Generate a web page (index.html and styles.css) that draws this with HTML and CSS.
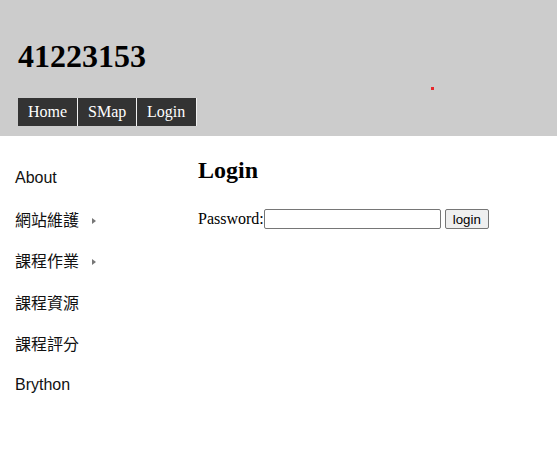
FILE: index.html
```html
<!DOCTYPE html>
<html>
<head>
<meta charset="utf-8">
<link rel="stylesheet" href="styles.css">
</head>
<body>
<header class="header">
  <h1 class="site-title">41223153</h1>
  <nav class="topnav">
    <a class="topnav-item" href="#">Home</a>
    <a class="topnav-item" href="#">SMap</a>
    <a class="topnav-item" href="#">Login</a>
  </nav>
  <span class="dot"></span>
</header>
<div class="main">
  <ul class="sidemenu">
    <li class="side-item">About</li>
    <li class="side-item">網站維護<span class="arrow"></span></li>
    <li class="side-item">課程作業<span class="arrow"></span></li>
    <li class="side-item">課程資源</li>
    <li class="side-item">課程評分</li>
    <li class="side-item">Brython</li>
  </ul>
  <section class="content">
    <h2 class="content-title">Login</h2>
    <form class="login-form">
      <label class="pw-label">Password:</label><input class="pw-input" type="password"><button class="login-btn" type="button">login</button>
    </form>
  </section>
</div>
</body>
</html>
```

FILE: styles.css
```css
html, body {
  margin: 0;
  padding: 0;
  background: #fff;
}
body {
  font-family: "Liberation Serif", "Times New Roman", serif;
  color: #000;
}
.header {
  position: relative;
  background: #cccccc;
  height: 136px;
  padding: 0 0 0 18px;
  box-sizing: border-box;
  display: flex;
  flex-direction: column;
}
.site-title {
  margin: 0;
  padding-top: 38px;
  font-size: 32px;
  line-height: 37px;
  font-weight: bold;
}
.topnav {
  display: flex;
  margin-top: 23px;
}
.topnav-item {
  display: block;
  background: #333333;
  color: #fff;
  text-decoration: none;
  font-size: 16px;
  height: 28px;
  line-height: 28px;
  padding: 0 10px;
  border-right: 1px solid #f0f0f0;
}
.topnav-item:nth-child(1) { width: 39px; }
.topnav-item:nth-child(2) { width: 38px; }
.topnav-item:nth-child(3) { width: 39px; }
.dot {
  position: absolute;
  left: 431px;
  top: 87px;
  width: 3px;
  height: 3px;
  background: #e8262b;
}
.main {
  display: flex;
}
.sidemenu {
  list-style: none;
  margin: 0;
  padding: 21px 0 0 15px;
  width: 183px;
  font-family: "Liberation Sans", Arial, "Noto Sans CJK TC", sans-serif;
  font-size: 16px;
  color: #111;
}
.side-item {
  display: flex;
  align-items: center;
  height: 41.4px;
}
.arrow {
  display: inline-block;
  margin-left: 13px;
  margin-top: 3px;
  width: 0;
  height: 0;
  border-top: 3px solid transparent;
  border-bottom: 3px solid transparent;
  border-left: 4px solid #777;
}
.content {
  flex: 1;
}
.content-title {
  margin: 20px 0 0 0;
  font-size: 24px;
  line-height: 28px;
  font-weight: bold;
}
.login-form {
  margin-top: 25px;
  display: flex;
  align-items: center;
  font-size: 16px;
}
.pw-input {
  width: 177px;
  height: 20px;
  box-sizing: border-box;
  border: 1px solid #767676;
  border-radius: 2px;
  padding: 1px 2px;
  margin: 0 4px 0 0;
  background: #fff;
}
.login-btn {
  height: 20px;
  width: 44px;
  box-sizing: border-box;
  padding: 0;
  font-family: "Liberation Sans", Arial, sans-serif;
  font-size: 13.3px;
  background: #efefef;
  border: 1px solid #767676;
  border-radius: 2px;
  color: #000;
}
```
